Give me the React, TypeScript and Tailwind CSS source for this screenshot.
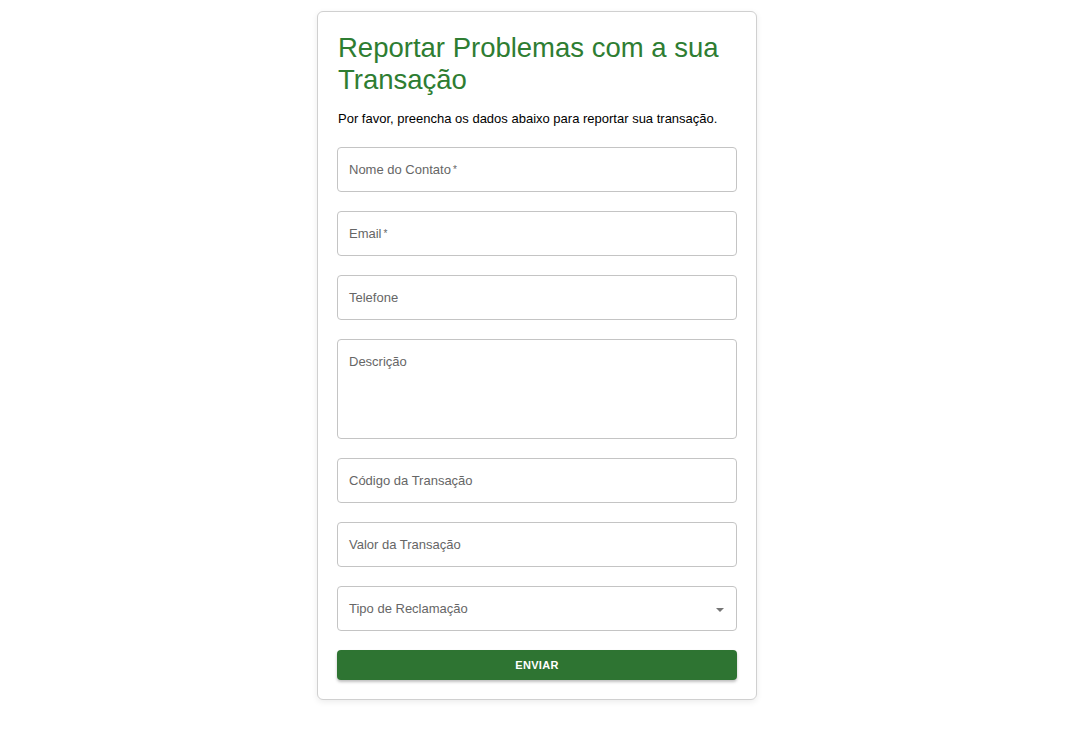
import React from "react"

const fields = [
  { label: "Nome do Contato", required: true },
  { label: "Email", required: true },
  { label: "Telefone" },
]

const fields2 = [{ label: "Código da Transação" }, { label: "Valor da Transação" }]

function Field({ label, required }: { label: string; required?: boolean }) {
  return (
    <div className="flex h-[45px] items-center rounded-[4px] border border-[#c4c4c4] px-[11px] text-[13px] text-[#666]">
      <span>
        {label}
        {required && <span className="relative -top-[1px] ml-[2px] text-[10px]">*</span>}
      </span>
    </div>
  )
}

export default function App() {
  return (
    <div className="flex min-h-screen justify-center bg-white pr-[1px] pt-[11px] font-['Liberation_Sans',Arial,sans-serif]">
      <div className="h-fit w-[440px] rounded-[6px] border border-[#d0d0d0] bg-white px-[19px] pb-[19px] pt-[20px] shadow-[0_2px_6px_rgba(0,0,0,0.08)]">
        <h1 className="pl-[1px] text-[27.5px] leading-[32px] text-[#2e7d32]">Reportar Problemas com a sua Transação</h1>
        <p className="mt-[14px] pl-[1px] text-[13px] leading-[18px] text-black">
          Por favor, preencha os dados abaixo para reportar sua transação.
        </p>
        <form className="mt-[19px] flex flex-col gap-[19px]">
          {fields.map((f) => (
            <Field key={f.label} {...f} />
          ))}
          <div className="h-[100px] rounded-[4px] border border-[#c4c4c4] px-[11px] pt-[12px] text-[13px] text-[#666]">
            Descrição
          </div>
          {fields2.map((f) => (
            <Field key={f.label} {...f} />
          ))}
          <div className="flex h-[45px] items-center justify-between rounded-[4px] border border-[#c4c4c4] pl-[11px] pr-[11px] text-[13px] text-[#666]">
            <span>Tipo de Reclamação</span>
            <svg width="8" height="4" viewBox="0 0 8 4" className="mr-[1px] mt-[2px]">
              <path d="M0 0 L8 0 L4 4 Z" fill="#757575" />
            </svg>
          </div>
          <button
            type="button"
            className="h-[30px] rounded-[4px] bg-[#2e7432] text-[11px] font-bold tracking-[0.3px] text-white shadow-[0_2px_3px_rgba(0,0,0,0.25)]"
          >
            ENVIAR
          </button>
        </form>
      </div>
    </div>
  )
}
